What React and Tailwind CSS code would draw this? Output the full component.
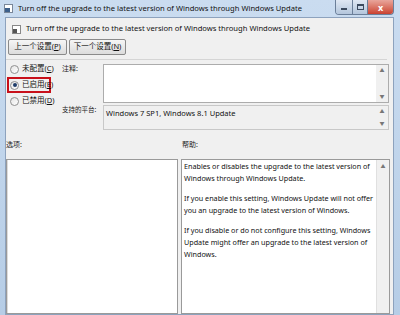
import React from "react";

const font = { fontFamily: '"Noto Sans", "Noto Sans CJK SC", sans-serif' };

function Radio({ label, checked }) {
  return (
    <div className="flex items-center gap-[3px] h-[16px] whitespace-nowrap">
      <span className="w-[9px] h-[9px] shrink-0 rounded-full border border-[#8f8f8f] bg-gradient-to-br from-[#e4e4e4] to-white flex items-center justify-center">
        {checked && <span className="w-[4px] h-[4px] rounded-full bg-[#1f3d6a]" />}
      </span>
      <span className="text-[7.5px] text-[#111] leading-none">{label}</span>
    </div>
  );
}

function ScrollArrows({ className }) {
  return (
    <div className={"w-[12px] flex flex-col justify-between items-center py-[3px] text-[5px] text-[#777] leading-none " + className}>
      <span>▲</span>
      <span>▼</span>
    </div>
  );
}

export default function App() {
  return (
    <div
      className="w-[400px] h-[315px] overflow-hidden flex flex-col bg-gradient-to-b from-[#cadcf0] to-[#b6cde6]"
      style={font}
    >
      {/* title bar */}
      <div className="h-[17px] flex items-center shrink-0">
        <div className="ml-[4px] w-[9px] h-[9px] bg-white border border-[#7a8799] flex items-end justify-start">
          <div className="w-[5px] h-[4px] bg-[#3c5f8a]" />
        </div>
        <span className="ml-[5px] text-[7.6px] text-[#111] whitespace-nowrap">
          Turn off the upgrade to the latest version of Windows through Windows Update
        </span>
        <div className="ml-auto mr-[6px] self-start flex h-[15px] rounded-b-[4px] overflow-hidden border border-t-0 border-[#6b7f99]">
          <div className="w-[16px] bg-gradient-to-b from-[#dfe8f3] to-[#b4c6dc] flex items-end justify-center pb-[4px]">
            <div className="w-[6px] h-[2px] bg-white border border-[#3b4a5e]" />
          </div>
          <div className="w-[15px] border-l border-[#6b7f99] bg-gradient-to-b from-[#dfe8f3] to-[#b4c6dc] flex items-center justify-center">
            <div className="w-[7px] h-[6px] border border-[#3b4a5e] border-t-2 bg-transparent" />
          </div>
          <div className="w-[26px] border-l border-[#6b7f99] bg-gradient-to-b from-[#e8a59b] to-[#c9402f] flex items-center justify-center text-white text-[9px] font-bold leading-none">
            x
          </div>
        </div>
      </div>

      {/* body */}
      <div className="flex flex-1 min-h-0">
        <div className="w-[5px] shrink-0" />
        <div className="flex-1 bg-[#f0f0f0] border border-[#8da2bd] flex flex-col min-w-0">
          {/* header */}
          <div className="flex items-center h-[18px] mt-[2px] pl-[6px]">
            <div className="w-[9px] h-[9px] border border-[#888] bg-white flex items-end">
              <div className="w-[4px] h-[4px] bg-[#555]" />
            </div>
            <span className="ml-[5px] text-[7.6px] text-[#111] whitespace-nowrap">
              Turn off the upgrade to the latest version of Windows through Windows Update
            </span>
          </div>
          {/* buttons */}
          <div className="flex gap-[2px] pl-[2px] mt-[1px]">
            <div className="w-[59px] h-[16px] rounded-[2px] border border-[#8a8a8a] bg-gradient-to-b from-[#f6f6f6] to-[#dcdcdc] flex items-center justify-center text-[7.5px] text-[#111] whitespace-nowrap">
              上一个设置(<span className="underline">P</span>)
            </div>
            <div className="w-[57px] h-[16px] rounded-[2px] border border-[#8a8a8a] bg-gradient-to-b from-[#f6f6f6] to-[#dcdcdc] flex items-center justify-center text-[7.5px] text-[#111] whitespace-nowrap">
              下一个设置(<span className="underline">N</span>)
            </div>
          </div>
          <div className="h-px bg-[#d5d5d5] mt-[4px] mr-[6px]" />
          {/* settings */}
          <div className="flex mt-[4px] h-[70px]">
            <div className="w-[56px] pl-[1px] flex flex-col -mt-[3px]">
              <div className="px-[3px]">
                <Radio label={<>未配置(<span className="underline">C</span>)</>} />
              </div>
              <div className="border-2 border-[#c8101a] px-[1px] w-[44px] h-[16px] flex items-center">
                <Radio label={<>已启用(<span className="underline">E</span>)</>} checked />
              </div>
              <div className="px-[3px]">
                <Radio label={<>已禁用(<span className="underline">D</span>)</>} />
              </div>
            </div>
            <div className="flex-1 flex flex-col">
              <div className="flex h-[39px]">
                <span className="w-[41px] text-[7px] leading-none text-[#222] pt-[1px]">注释:</span>
                <div className="flex-1 flex bg-white border border-[#acacac] mr-[4px]">
                  <div className="flex-1" />
                  <ScrollArrows className="bg-[#f0f0f0]" />
                </div>
              </div>
              <div className="flex h-[25px] mt-[2px]">
                <span className="w-[41px] text-[6.5px] leading-none text-[#222] pt-[2px] whitespace-nowrap">支持的平台:</span>
                <div className="flex-1 flex border border-[#c8c8c8] mr-[4px]">
                  <div className="flex-1 text-[7.5px] leading-none text-[#111] pl-[2px] pt-[4px] whitespace-nowrap">
                    Windows 7 SP1, Windows 8.1 Update
                  </div>
                  <ScrollArrows />
                </div>
              </div>
            </div>
          </div>
          {/* labels */}
          <div className="flex h-[25px] pt-[7px] items-start leading-none">
            <span className="w-[176px] text-[7px] text-[#222]">选项:</span>
            <span className="text-[7px] text-[#222]">帮助:</span>
          </div>
          {/* lower panes */}
          <div className="flex flex-1 min-h-0 mr-[3px]">
            <div className="w-[172px] bg-white border border-[#9a9a9a] shadow-[inset_1px_0_0_#dcdcdc]" />
            <div className="w-[3px]" />
            <div className="flex-1 flex border border-[#9a9a9a] bg-white">
              <div className="flex-1 px-[2px] pt-0 text-[7.2px] leading-[12px] text-[#111]">
                <p>Enables or disables the upgrade to the latest version of Windows through Windows Update.</p>
                <p className="mt-[8px]">
                  If you enable this setting, Windows Update will not offer you an upgrade to the latest version of Windows.
                </p>
                <p className="mt-[8px]">
                  If you disable or do not configure this setting, Windows Update might offer an upgrade to the latest version of Windows.
                </p>
              </div>
              <div className="w-[13px] bg-[#f0f0f0] border-l border-[#e0e0e0] flex flex-col items-center pt-[4px] text-[5px] text-[#777] leading-none">
                ▲
              </div>
            </div>
          </div>
        </div>
        <div className="w-[6px] shrink-0" />
      </div>
    </div>
  );
}
